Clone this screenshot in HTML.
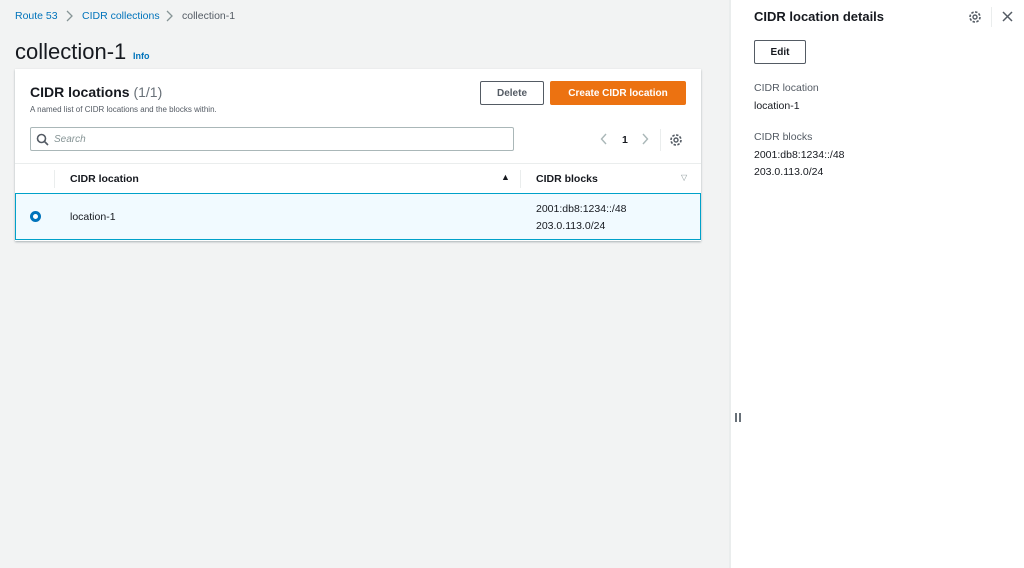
<!DOCTYPE html>
<html><head><style>
*{box-sizing:border-box;margin:0;padding:0}
body{width:1024px;height:568px;background:#f2f3f3;font-family:"Liberation Sans",sans-serif;color:#16191f;position:relative;overflow:hidden;font-size:10.5px}
.a{position:absolute;white-space:nowrap}
.link{color:#0073bb}
.card{position:absolute;left:15px;top:69px;width:686px;height:172px;background:#fff;box-shadow:0 1px 2px rgba(0,28,36,.3)}
.btn{position:absolute;border:1px solid #545b64;background:#fff;font-weight:bold;font-size:10px;color:#545b64;text-align:center;border-radius:2px}
</style></head><body>
<div class="a link" style="left:15px;top:10px">Route 53</div>
<svg class="a" style="left:66px;top:10px" width="7" height="12"><path d="M1 1L6 6L1 11" fill="none" stroke="#879596" stroke-width="1.3"/></svg>
<div class="a link" style="left:82px;top:10px">CIDR collections</div>
<svg class="a" style="left:166px;top:10px" width="7" height="12"><path d="M1 1L6 6L1 11" fill="none" stroke="#879596" stroke-width="1.3"/></svg>
<div class="a" style="left:182px;top:10px;color:#545b64">collection-1</div>
<div class="a" style="left:15px;top:39px;font-size:22px">collection-1</div>
<div class="a link" style="left:133px;top:51px;font-size:9px;font-weight:bold">Info</div>
<div class="card">
 <div class="a" style="left:15px;top:15px;font-size:14px;font-weight:bold">CIDR locations <span style="font-weight:normal;color:#687078">(1/1)</span></div>
 <div class="a" style="left:15px;top:36px;font-size:8px;color:#545b64">A named list of CIDR locations and the blocks within.</div>
 <div class="btn" style="left:465px;top:12px;width:64px;height:24px;line-height:23px">Delete</div>
 <div class="a" style="left:535px;top:12px;width:136px;height:24px;line-height:25px;background:#ec7211;color:#fff;font-weight:bold;font-size:10px;text-align:center;border-radius:2px">Create CIDR location</div>
 <div class="a" style="left:15px;top:58px;width:484px;height:24px;border:1px solid #aab7b8;border-radius:2px"></div>
 <svg class="a" style="left:21px;top:64px" width="13" height="13"><circle cx="5.5" cy="5.5" r="4" fill="none" stroke="#545b64" stroke-width="1.6"/><line x1="8.5" y1="8.5" x2="12" y2="12" stroke="#545b64" stroke-width="1.6"/></svg>
 <div class="a" style="left:39px;top:65px;font-style:italic;color:#879596;font-size:10px">Search</div>
 <svg class="a" style="left:585px;top:64px" width="8" height="12"><path d="M6 1L1.5 6L6 11" fill="none" stroke="#aab7b8" stroke-width="1.4"/></svg>
 <div class="a" style="left:607px;top:65px;font-weight:bold">1</div>
 <svg class="a" style="left:626px;top:64px" width="8" height="12"><path d="M2 1L6.5 6L2 11" fill="none" stroke="#aab7b8" stroke-width="1.4"/></svg>
 <div class="a" style="left:645px;top:60px;width:1px;height:22px;background:#eaeded"></div>
 <svg class="a" style="left:654px;top:64px" width="14" height="14" viewBox="0 0 14 14"><circle cx="7" cy="7" r="5" fill="none" stroke="#545b64" stroke-width="1.6" stroke-dasharray="2.5 1.4"/><circle cx="7" cy="7" r="2" fill="none" stroke="#545b64" stroke-width="1.4"/></svg>
 <div class="a" style="left:0;top:94px;width:686px;height:1px;background:#eaeded"></div>
 <div class="a" style="left:39px;top:101px;width:1px;height:18px;background:#eaeded"></div>
 <div class="a" style="left:55px;top:104px;font-weight:bold;color:#16191f">CIDR location</div>
 <div class="a" style="left:486px;top:103px;font-size:9px">▲</div>
 <div class="a" style="left:505px;top:101px;width:1px;height:18px;background:#eaeded"></div>
 <div class="a" style="left:521px;top:104px;font-weight:bold">CIDR blocks</div>
 <div class="a" style="left:666px;top:104px;font-size:8px;color:#879596">▽</div>
 <div class="a" style="left:0;top:124px;width:686px;height:47px;background:#f1faff;border:1px solid #00a1c9"></div>
 <div class="a" style="left:15px;top:142px;width:11px;height:11px;border-radius:50%;border:3.5px solid #0073bb;background:#fff"></div>
 <div class="a" style="left:55px;top:142px">location-1</div>
 <div class="a" style="left:521px;top:134px">2001:db8:1234::/48</div>
 <div class="a" style="left:521px;top:151px">203.0.113.0/24</div>
</div>
<div class="a" style="left:729px;top:0;width:295px;height:568px;background:#fff;border-left:2px solid #eaeded"></div>
<div class="a" style="left:735px;top:413px;width:2px;height:9px;background:#687078"></div>
<div class="a" style="left:739px;top:413px;width:2px;height:9px;background:#687078"></div>
<div class="a" style="left:754px;top:9px;font-size:13px;font-weight:bold">CIDR location details</div>
<svg class="a" style="left:968px;top:10px" width="14" height="14" viewBox="0 0 14 14"><circle cx="7" cy="7" r="5" fill="none" stroke="#545b64" stroke-width="1.6" stroke-dasharray="2.5 1.4"/><circle cx="7" cy="7" r="2" fill="none" stroke="#545b64" stroke-width="1.4"/></svg>
<div class="a" style="left:991px;top:7px;width:1px;height:20px;background:#eaeded"></div>
<svg class="a" style="left:1002px;top:11px" width="11" height="11"><path d="M1 1L10 10M10 1L1 10" stroke="#545b64" stroke-width="1.5"/></svg>
<div class="btn" style="left:754px;top:40px;width:52px;height:24px;line-height:23px;color:#16191f">Edit</div>
<div class="a" style="left:754px;top:82px;color:#545b64">CIDR location</div>
<div class="a" style="left:754px;top:100px">location-1</div>
<div class="a" style="left:754px;top:131px;color:#545b64">CIDR blocks</div>
<div class="a" style="left:754px;top:149px">2001:db8:1234::/48</div>
<div class="a" style="left:754px;top:166px">203.0.113.0/24</div>
</body></html>
